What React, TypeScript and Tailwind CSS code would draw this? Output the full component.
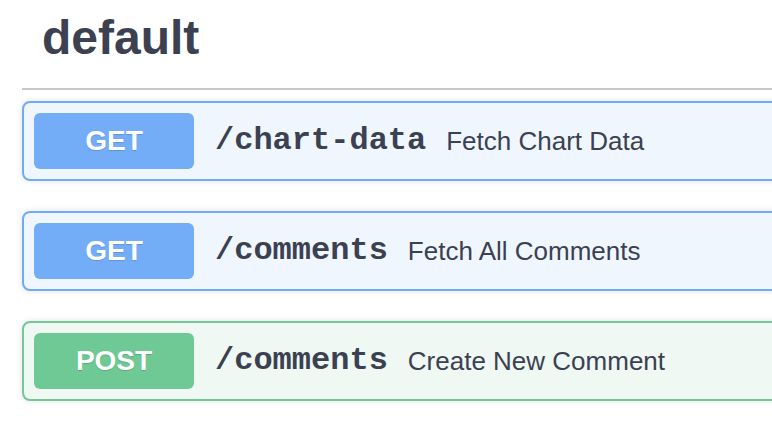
import React from 'react';

type Op = { method: 'GET' | 'POST'; path: string; summary: string };

const ops: Op[] = [
  { method: 'GET', path: '/chart-data', summary: 'Fetch Chart Data' },
  { method: 'GET', path: '/comments', summary: 'Fetch All Comments' },
  { method: 'POST', path: '/comments', summary: 'Create New Comment' },
];

const OpBlock: React.FC<{ op: Op }> = ({ op }) => {
  const isGet = op.method === 'GET';
  return (
    <div
      className={
        isGet
          ? 'flex items-center h-[80px] w-[820px] rounded-[8px] border-2 border-[#6fabf8] bg-[#eff6fe] shadow-[0_0_6px_rgba(0,0,0,0.12)] px-[10px]'
          : 'flex items-center h-[80px] w-[820px] rounded-[8px] border-2 border-[#72c997] bg-[#eff8f3] shadow-[0_0_6px_rgba(0,0,0,0.12)] px-[10px]'
      }
    >
      <div
        className={
          isGet
            ? 'flex items-center justify-center w-[160px] h-[56px] rounded-[6px] bg-[#73adf8] text-white font-bold text-[28px] [text-shadow:0_1px_1px_rgba(0,0,0,0.15)]'
            : 'flex items-center justify-center w-[160px] h-[56px] rounded-[6px] bg-[#6fc994] text-white font-bold text-[28px] [text-shadow:0_1px_1px_rgba(0,0,0,0.15)]'
        }
        style={{ fontFamily: '"Liberation Sans", Arial, sans-serif' }}
      >
        {op.method}
      </div>
      <span
        className="ml-[21px] font-bold text-[32px] text-[#3b4151]"
        style={{ fontFamily: '"Courier New", "Liberation Mono", monospace' }}
      >
        {op.path}
      </span>
      <span
        className="ml-[20px] text-[26px] text-[#3b4151]"
        style={{ fontFamily: '"Liberation Sans", Arial, sans-serif' }}
      >
        {op.summary}
      </span>
    </div>
  );
};

const App: React.FC = () => {
  return (
    <div className="w-[772px] h-[436px] overflow-hidden bg-white">
      <div className="pl-[22px] w-[820px]">
        <h4
          className="h-[90px] pl-[20px] pt-[8px] border-b-2 border-[#c6c7cb] font-bold text-[48px] leading-[60px] text-[#3b4151]"
          style={{ fontFamily: '"Liberation Sans", Arial, sans-serif' }}
        >
          default
        </h4>
        <div className="flex flex-col gap-[30px] mt-[11px]">
          {ops.map((op, i) => (
            <OpBlock key={i} op={op} />
          ))}
        </div>
      </div>
    </div>
  );
};

export default App;
